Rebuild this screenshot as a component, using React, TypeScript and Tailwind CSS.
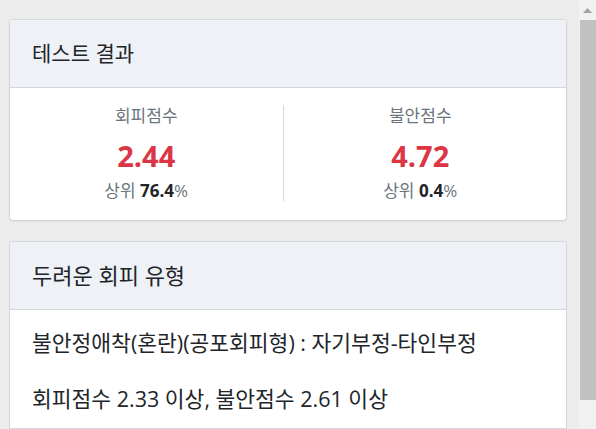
import React from "react";

function ScoreCol({label, value, pct, divider}: any) {
    return <div className={`flex h-[96px] flex-col items-center ${divider ? 'border-r border-[#d6d8db]' : ''}`}>
        <div className="text-[17px] leading-[22px] text-[#6c757d]">{label}</div>
        <div className="mt-[10px] text-[29px] font-bold leading-[38px] text-[#dc3545]">{value}</div>
        <div className="mt-[6px] text-[17px] leading-[20px] text-[#6c757d]">
            상위 <span className="font-bold text-[#212529]">{pct}</span>%
        </div>
    </div>
}

export default function App() {
    return <div
        className="flex h-[429px] w-[596px] overflow-hidden bg-[#ececec] font-['Open_Sans','Noto_Sans_CJK_KR',sans-serif] text-[#212529]">
        <div className="flex flex-1 flex-col gap-[20px] pl-[9px] pr-[12px] pt-[19px]">
            {/* 테스트 결과 */}
            <div className="overflow-hidden rounded-[4px] border border-[#d3d6da] bg-white shadow-[0_1px_2px_rgba(0,0,0,0.06)]">
                <div className="flex h-[68px] items-center border-b border-[#d3d6da] bg-[#eef1f5] px-[22px]">
                    <h5 className="text-[21px] font-normal">테스트 결과</h5>
                </div>
                <div className="grid grid-cols-2 pb-[19px] pr-[9px] pt-[17px]">
                    <ScoreCol label="회피점수" value="2.44" pct="76.4" divider/>
                    <ScoreCol label="불안점수" value="4.72" pct="0.4"/>
                </div>
            </div>

            {/* 두려운 회피 유형 */}
            <div className="flex-1 overflow-hidden rounded-t-[4px] border border-[#d3d6da] bg-white">
                <div className="flex h-[68px] items-center border-b border-[#d3d6da] bg-[#eef1f5] px-[22px]">
                    <h4 className="text-[22px] font-normal">두려운 회피 유형</h4>
                </div>
                <div className="px-[22px] pt-[18px] text-[21.5px] leading-[30px]">
                    <p>불안정애착(혼란)(공포회피형) : 자기부정-타인부정</p>
                    <p className="mt-[26px]">회피점수 2.33 이상, 불안점수 2.61 이상</p>
                </div>
            </div>
        </div>

        {/* scrollbar */}
        <div className="flex w-[17px] flex-col bg-[#f1f1f1]">
            <div className="flex h-[20px] items-center justify-center">
                <svg width="9" height="5" viewBox="0 0 9 5">
                    <path d="M0 5L4.5 0L9 5Z" fill="#a3a3a3"/>
                </svg>
            </div>
            <div className="ml-[1px] h-[380px] bg-[#c1c1c1]"/>
        </div>
    </div>
}
